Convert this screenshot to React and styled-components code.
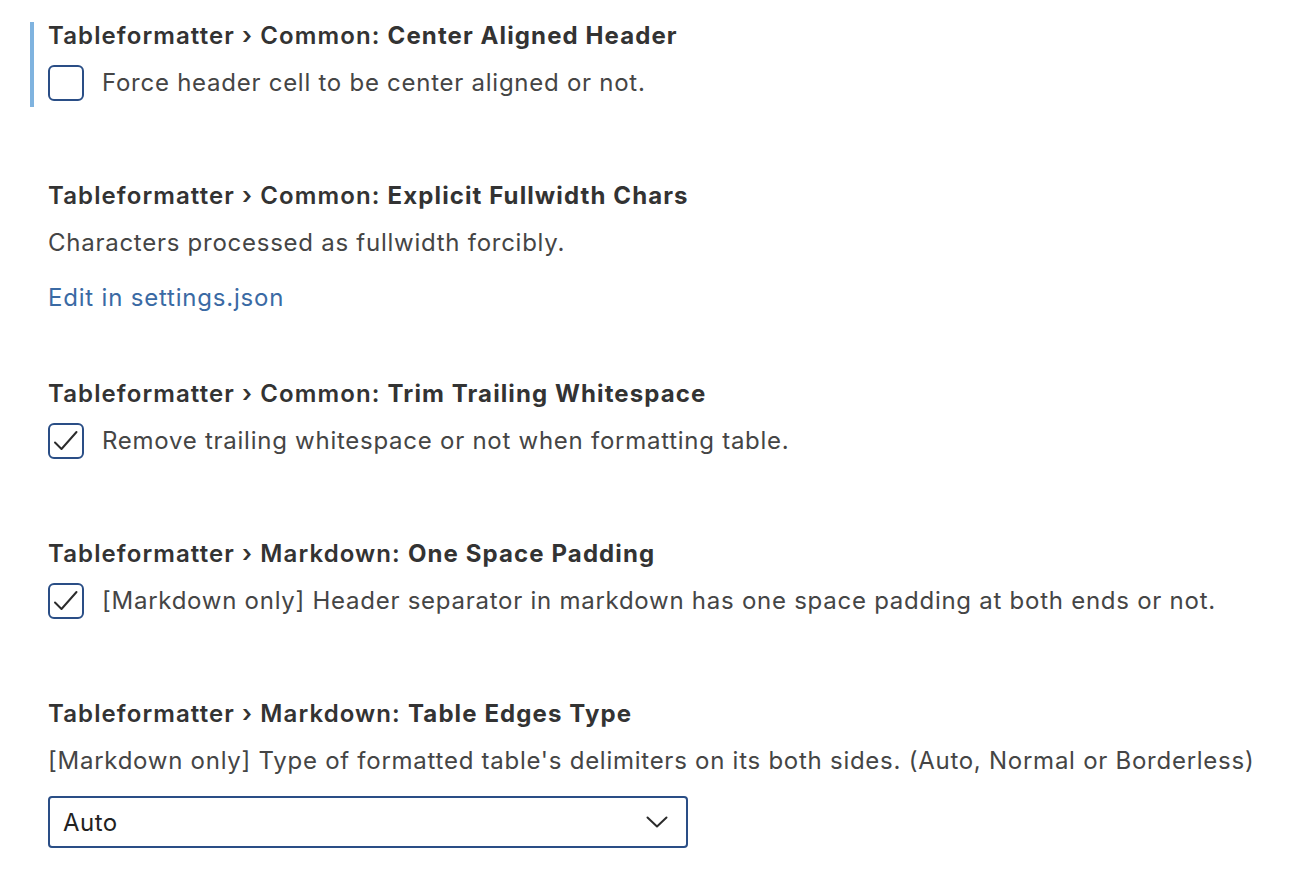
import React from 'react'
import styled, { createGlobalStyle } from 'styled-components'

const GlobalStyle = createGlobalStyle`
  html, body {
    margin: 0;
    background: #ffffff;
  }
  body {
    font-family: Inter, "Open Sans", "Liberation Sans", sans-serif;
  }
`

const settings = [
  {
    category: 'Tableformatter › Common: ',
    label: 'Center Aligned Header',
    type: 'boolean',
    value: false,
    focused: true,
    description: 'Force header cell to be center aligned or not.'
  },
  {
    category: 'Tableformatter › Common: ',
    label: 'Explicit Fullwidth Chars',
    type: 'json',
    description: 'Characters processed as fullwidth forcibly.'
  },
  {
    category: 'Tableformatter › Common: ',
    label: 'Trim Trailing Whitespace',
    type: 'boolean',
    value: true,
    description: 'Remove trailing whitespace or not when formatting table.'
  },
  {
    category: 'Tableformatter › Markdown: ',
    label: 'One Space Padding',
    type: 'boolean',
    value: true,
    description:
      '[Markdown only] Header separator in markdown has one space padding at both ends or not.'
  },
  {
    category: 'Tableformatter › Markdown: ',
    label: 'Table Edges Type',
    type: 'enum',
    value: 'Auto',
    description:
      "[Markdown only] Type of formatted table's delimiters on its both sides. (Auto, Normal or Borderless)"
  }
]

const Page = styled.div`
  display: flex;
  flex-direction: column;
  gap: 75px;
  padding: 22px 0 0 30px;
  min-height: 886px;
  box-sizing: border-box;
`

const Item = styled.div`
  display: flex;
  flex-direction: column;
  border-left: 4px solid ${p => (p.$focused ? '#7fb3df' : 'transparent')};
  padding: 0 0 6px 14px;
`

const Title = styled.div`
  font-size: 24px;
  line-height: 28px;
  letter-spacing: 1.1px;
  color: #333333;
  font-weight: 600;
  white-space: nowrap;
`

const Key = styled.span`
  font-weight: 700;
`

const Row = styled.div`
  display: flex;
  align-items: center;
  gap: 18px;
  height: 36px;
  margin-top: 15px;
`

const Description = styled.div`
  font-size: 24px;
  line-height: 36px;
  letter-spacing: 0.74px;
  color: #454545;
  white-space: nowrap;
`

const Box = styled.div`
  width: 36px;
  height: 36px;
  box-sizing: border-box;
  border: 2px solid #2a4e86;
  border-radius: 6px;
  display: flex;
  align-items: center;
  justify-content: center;
  flex-shrink: 0;
`

const Link = styled.a`
  font-size: 24px;
  line-height: 28px;
  letter-spacing: 0.8px;
  color: #3a6aa4;
  text-decoration: none;
  margin: 23px 0 -13px;
  align-self: flex-start;
`

const Select = styled.div`
  display: flex;
  align-items: center;
  justify-content: space-between;
  width: 640px;
  height: 52px;
  box-sizing: border-box;
  margin-top: 17px;
  padding: 0 18px 0 13px;
  border: 2px solid #2a4e86;
  border-radius: 4px;
  font-size: 24px;
  letter-spacing: 0.5px;
  color: #222222;
`

const Checkbox = ({ checked }) => (
  <Box>
    {checked && (
      <svg width='30' height='30' viewBox='0 0 30 30' fill='none'>
        <path d='M4 16.5 L10.5 23 L25.5 6' stroke='#2b2b2b' strokeWidth='2' strokeLinecap='round' strokeLinejoin='round' />
      </svg>
    )}
  </Box>
)

const Chevron = () => (
  <svg width='22' height='12' viewBox='0 0 22 12' fill='none'>
    <path d='M1.5 1.5 L11 10.5 L20.5 1.5' stroke='#2b2b2b' strokeWidth='2' strokeLinecap='round' strokeLinejoin='round' />
  </svg>
)

const Setting = ({ s }) => (
  <Item $focused={s.focused}>
    <Title>
      {s.category}
      <Key>{s.label}</Key>
    </Title>
    {s.type === 'boolean' ? (
      <Row>
        <Checkbox checked={s.value} />
        <Description>{s.description}</Description>
      </Row>
    ) : (
      <Row>
        <Description>{s.description}</Description>
      </Row>
    )}
    {s.type === 'json' && <Link href='#'>Edit in settings.json</Link>}
    {s.type === 'enum' && (
      <Select>
        <span>{s.value}</span>
        <Chevron />
      </Select>
    )}
  </Item>
)

export default function App () {
  return (
    <>
      <GlobalStyle />
      <Page>
        {settings.map((s, i) => (
          <Setting key={i} s={s} />
        ))}
      </Page>
    </>
  )
}
